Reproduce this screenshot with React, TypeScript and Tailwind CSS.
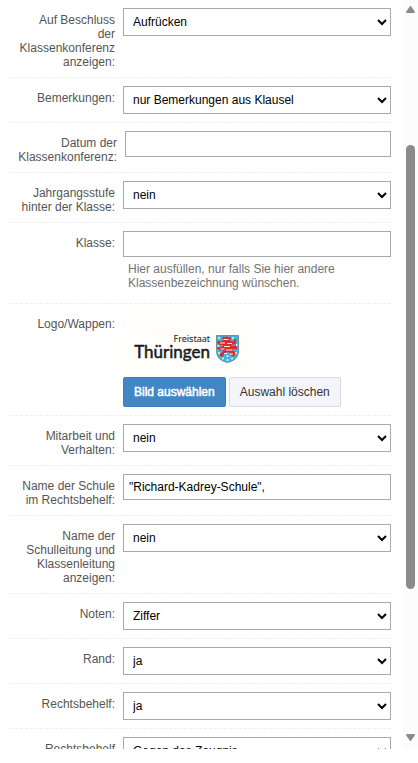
import { useState } from "react";
import type { ReactNode } from "react";

const controlClass =
  "block w-full rounded-none border border-[#aaaaaa] bg-white text-xs text-black outline-none focus:border-[#4187c3]";

type RowProps = {
  id: string;
  label: string;
  wide?: boolean;
  children: ReactNode;
};

function Row({ id, label, wide, children }: RowProps) {
  return (
    <div
      className={
        wide
          ? "flex gap-2 border-b border-dashed border-[#eeeeee] py-2 pl-2"
          : "flex gap-2 border-b border-dashed border-[#eeeeee] py-2 pl-[9px]"
      }
    >
      <label
        htmlFor={id}
        className={
          wide
            ? "w-[99px] shrink-0 pt-[5px] text-right text-xs leading-[14px] text-[#555555]"
            : "w-24 shrink-0 pt-[5px] text-right text-xs leading-[14px] text-[#555555]"
        }
      >
        {label}
      </label>
      <div className="min-w-0 flex-1">{children}</div>
    </div>
  );
}

type SelectRowProps = {
  id: string;
  label: string;
  options: string[];
};

function SelectRow({ id, label, options }: SelectRowProps) {
  const [value, setValue] = useState(options[0]);

  return (
    <Row id={id} label={label}>
      <select
        id={id}
        value={value}
        onChange={(e: React.ChangeEvent<HTMLSelectElement>) =>
          setValue(e.target.value)
        }
        className={`${controlClass} h-7 pl-[5px]`}
      >
        {options.map((option) => (
          <option key={option} value={option}>
            {option}
          </option>
        ))}
      </select>
    </Row>
  );
}

function ThueringenLogo() {
  return (
    <svg
      role="img"
      aria-label="Freistaat Thüringen"
      viewBox="0 0 128 62"
      className="block h-[62px] w-32 bg-[#fffefb]"
    >
      <text
        x="87"
        y="30"
        textAnchor="end"
        fontSize="9"
        fill="#2b2b2b"
        stroke="#2b2b2b"
        strokeWidth="0.1"
        className="font-['Noto_Sans',sans-serif]"
      >
        Freistaat
      </text>
      <text
        x="87"
        y="46"
        textAnchor="end"
        fontSize="17"
        fill="#1a1a1a"
        stroke="#1a1a1a"
        strokeWidth="0.5"
        className="font-[Lato,sans-serif]"
      >
        Thüringen
      </text>
      <path
        d="M93.500 23.500h22v15c0 7-4 10.500-11 12c-7-1.500-11-5-11-12z"
        fill="#45b5dc"
        stroke="#5d7f8c"
        strokeWidth="0.800"
      />
      {/* lion */}
      <path
        d="M99 25l2-.5l1 1l1.500-1.500l1.500 1.500l2-1l1 2l-1 2l3 1l2-2l1.500 1.500l-2 3l-3 1v1l3-.5l3 1.500l-1 2.500l-4-.5l-1 1l4 2l-1 4l-3 .5l0-3l-4-1.500l-3 1l-1.500 3.500l-3 0l0-2.500l2.500-2l.5-2l-3 .5l-3-2l1-2l3 .5l2.500-2l-4 0l-2.500-2.500l1-2l2.500 1l2.500-.5z"
        fill="#e0282e"
      />
      <path
        d="M100.500 27.500h5M97 31h5M104 31.500h5M101 34.500h6M97.500 37h4M103 38h6M101 41.500h3M107 42h3"
        stroke="#f9ebe9"
        strokeWidth="1.200"
      />
      <path
        d="M112.500 27c-2.500 2 1.500 4-.5 8"
        fill="none"
        stroke="#e0282e"
        strokeWidth="1.200"
      />
      <g fill="#e9f7fb">
        <circle cx="96" cy="26" r="1" />
        <circle cx="110" cy="26" r="1" />
        <circle cx="95.500" cy="34" r="1" />
        <circle cx="96" cy="41" r="1" />
        <circle cx="113.500" cy="33" r="1" />
        <circle cx="113" cy="41" r="1" />
        <circle cx="100" cy="46.500" r="1" />
        <circle cx="104.500" cy="44" r="1" />
        <circle cx="104.500" cy="48" r="1" />
        <circle cx="109" cy="46.500" r="1" />
      </g>
    </svg>
  );
}

function Scrollbar() {
  return (
    <div aria-hidden="true" className="flex w-[15px] shrink-0 flex-col items-center bg-[#fcfcfc] pt-1.5 pb-2">
      <svg viewBox="0 0 9 7" className="h-[7px] w-[9px] shrink-0">
        <path d="M4.500 1L8 6H1z" fill="#8b8b8b" stroke="#8b8b8b" strokeWidth="1.800" strokeLinejoin="round" />
      </svg>
      <div className="flex-[132]" />
      <div className="w-[9px] flex-[444] rounded-full bg-[#8b8b8b]" />
      <div className="flex-[145]" />
      <svg viewBox="0 0 9 7" className="h-[7px] w-[9px] shrink-0">
        <path d="M1 1h7L4.500 6z" fill="#8b8b8b" stroke="#8b8b8b" strokeWidth="1.800" strokeLinejoin="round" />
      </svg>
    </div>
  );
}

export default function App() {
  const [conferenceDate, setConferenceDate] = useState("");
  const [className, setClassName] = useState("");
  const [schoolName, setSchoolName] = useState('"Richard-Kadrey-Schule",');

  return (
    <main className="h-screen bg-white pb-3.5 font-['Liberation_Sans',Arial,sans-serif]">
      <div className="flex h-full overflow-hidden">
        <form
          className="min-w-0 flex-1 overflow-hidden pr-3 pl-2.5"
          onSubmit={(e) => e.preventDefault()}
        >
          <SelectRow
            id="beschluss"
            label="Auf Beschluss der Klassenkonferenz anzeigen:"
            options={["Aufrücken", "nein"]}
          />
          <SelectRow
            id="bemerkungen"
            label="Bemerkungen:"
            options={["nur Bemerkungen aus Klausel", "nein"]}
          />
          <Row id="datum" label="Datum der Klassenkonferenz:" wide>
            <input
              id="datum"
              type="text"
              value={conferenceDate}
              onChange={(e) => setConferenceDate(e.target.value)}
              className={`${controlClass} h-[26px] px-[5px]`}
            />
          </Row>
          <SelectRow
            id="jahrgang"
            label="Jahrgangsstufe hinter der Klasse:"
            options={["nein", "ja"]}
          />
          <Row id="klasse" label="Klasse:">
            <input
              id="klasse"
              type="text"
              value={className}
              onChange={(e) => setClassName(e.target.value)}
              aria-describedby="klasse-hint"
              className={`${controlClass} h-[26px] px-[5px]`}
            />
            <p
              id="klasse-hint"
              className="mt-[5px] mb-[5px] pl-[5px] text-xs leading-[14px] text-[#737373]"
            >
              Hier ausfüllen, nur falls Sie hier andere Klassenbezeichnung wünschen.
            </p>
          </Row>
          <Row id="logo" label="Logo/Wappen:">
            <ThueringenLogo />
            <div className="mt-[3px] flex gap-[3px]">
              <button
                id="logo"
                type="button"
                className="h-[30px] rounded-xs border border-[#397fba] bg-[#4187c3] px-2.5 text-xs whitespace-nowrap text-white [-webkit-text-stroke:0.5px_white]"
              >
                Bild auswählen
              </button>
              <button
                type="button"
                className="h-[30px] rounded-xs border border-[#d9dae3] bg-[#f4f5fa] px-2.5 text-xs whitespace-nowrap text-[#333333]"
              >
                Auswahl löschen
              </button>
            </div>
          </Row>
          <SelectRow
            id="mitarbeit"
            label="Mitarbeit und Verhalten:"
            options={["nein", "ja"]}
          />
          <Row id="schule" label="Name der Schule im Rechtsbehelf:">
            <input
              id="schule"
              type="text"
              value={schoolName}
              onChange={(e) => setSchoolName(e.target.value)}
              className={`${controlClass} h-[26px] px-[5px]`}
            />
          </Row>
          <SelectRow
            id="leitung"
            label="Name der Schulleitung und Klassenleitung anzeigen:"
            options={["nein", "ja"]}
          />
          <SelectRow id="noten" label="Noten:" options={["Ziffer", "Text"]} />
          <SelectRow id="rand" label="Rand:" options={["ja", "nein"]} />
          <SelectRow
            id="rechtsbehelf"
            label="Rechtsbehelf:"
            options={["ja", "nein"]}
          />
          <SelectRow
            id="rechtsbehelf-text"
            label="Rechtsbehelf Einleitung:"
            options={["Gegen das Zeugnis", "nein"]}
          />
        </form>
        <Scrollbar />
      </div>
    </main>
  );
}
